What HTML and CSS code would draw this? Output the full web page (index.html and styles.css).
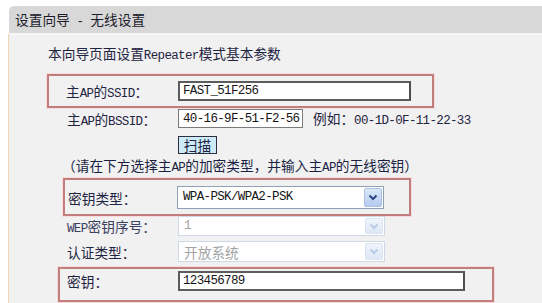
FILE: index.html
```html
<!DOCTYPE html>
<html lang="zh-CN">
<head>
<meta charset="utf-8">
<title>设置向导 - 无线设置</title>
<link rel="stylesheet" href="styles.css">
</head>
<body>
<div class="page">
  <div class="header">设置向导<span class="en"> - </span>无线设置</div>
  <div class="panel">
    <p class="intro">本向导页面设置<span class="en">Repeater</span>模式基本参数</p>

    <div class="box box1">
      <div class="row">
        <span class="lbl">主<span class="en">AP</span>的<span class="en">SSID</span>：</span>
        <input class="txt ssid" type="text" value="FAST_51F256">
      </div>
    </div>

    <div class="row plain bssid-row">
      <span class="lbl">主<span class="en">AP</span>的<span class="en">BSSID</span>：</span>
      <input class="txt bssid" type="text" value="40-16-9F-51-F2-56">
      <span class="hint">例如：<span class="en">00-1D-0F-11-22-33</span></span>
    </div>

    <div class="row plain btn-row">
      <span class="lbl"></span>
      <button class="btn" type="button">扫描</button>
    </div>

    <p class="note">（请在下方选择主<span class="en">AP</span>的加密类型，并输入主<span class="en">AP</span>的无线密钥）</p>

    <div class="box box2">
      <div class="row">
        <span class="lbl">密钥类型：</span>
        <div class="sel sel-main">
          <span class="sel-val en">WPA-PSK/WPA2-PSK</span>
          <span class="sel-arrow"><svg width="10" height="7" viewBox="0 0 10 7"><polyline points="1.5,1.5 5,5 8.5,1.5" fill="none" stroke="#2d4785" stroke-width="2"/></svg></span>
        </div>
      </div>
    </div>

    <div class="row plain wep-row">
      <span class="lbl lbl-dim"><span class="en">WEP</span>密钥序号：</span>
      <div class="sel sel-off sel-wep">
        <span class="sel-val en">1</span>
        <span class="sel-arrow"><svg width="10" height="7" viewBox="0 0 10 7"><polyline points="1.5,1.5 5,5 8.5,1.5" fill="none" stroke="#b9cde6" stroke-width="2"/></svg></span>
      </div>
    </div>

    <div class="row plain auth-row">
      <span class="lbl">认证类型：</span>
      <div class="sel sel-off sel-auth">
        <span class="sel-val">开放系统</span>
        <span class="sel-arrow"><svg width="10" height="7" viewBox="0 0 10 7"><polyline points="1.5,1.5 5,5 8.5,1.5" fill="none" stroke="#b9cde6" stroke-width="2"/></svg></span>
      </div>
    </div>

    <div class="box box3">
      <div class="row">
        <span class="lbl">密钥：</span>
        <input class="txt key" type="text" value="123456789">
      </div>
    </div>
  </div>
</div>
</body>
</html>
```

FILE: styles.css
```css
html, body {
  margin: 0;
  padding: 0;
  background: #ffffff;
}

body {
  font-family: "Noto Sans CJK SC", "Noto Sans", sans-serif;
  font-size: 13.7px;
  line-height: 16px;
  color: #1f2442;
  overflow: hidden;
}

.en {
  font-family: "Liberation Mono", "DejaVu Sans Mono", monospace;
  font-size: 12.5px;
  letter-spacing: -0.65px;
  line-height: 1;
}

.page {
  height: 303px;
  padding-top: 6px;
  box-sizing: border-box;
  display: flex;
  flex-direction: column;
}

.header {
  flex: none;
  margin-left: 9px;
  height: 27px;
  line-height: 27px;
  padding-left: 6px;
  background: #d8d8d8;
  border-top-left-radius: 5px;
  color: #1c1c2c;
  white-space: pre;
}

.panel {
  flex: 1;
  margin-left: 8px;
  border-left: 1px solid #f0d2b4;
  background: #f1f1f1;
  border-top: 2px solid #f6f6f6;
  overflow: hidden;
}

.intro {
  margin: 9px 0 0 39px;
  line-height: 18px;
  height: 18px;
  white-space: nowrap;
}

.row {
  display: flex;
  align-items: center;
}

.lbl {
  flex: none;
  white-space: nowrap;
  line-height: 16px;
  height: 16px;
}

.lbl-dim {
  color: #3b4060;
}

.box {
  box-sizing: border-box;
  border: 2px solid #c27d7d;
  box-shadow: 0 0 0 1px #f6dcdc;
}

.box1 {
  margin: 12px 0 0 38px;
  width: 387px;
  height: 34px;
  padding: 5px 0 5px 17px;
}
.box1 .lbl { width: 112px; }

.plain {
  margin-left: 58px;
}
.plain .lbl { width: 111px; }

.bssid-row { margin-top: 1px; height: 19px; }
.btn-row { margin-top: 8px; height: 18px; }

.note {
  margin: 3px 0 0 53px;
  line-height: 16px;
  height: 16px;
  white-space: nowrap;
  color: #1a1f44;
}

.box2 {
  margin: 5px 0 0 54px;
  width: 348px;
  height: 38px;
  padding: 6px 0 5px 3px;
}
.box2 .lbl { width: 109px; }

.wep-row { margin-top: 0; height: 20px; }
.auth-row { margin-top: 5px; height: 21px; }

.box3 {
  margin: 5px 0 0 49px;
  width: 436px;
  height: 35px;
  padding: 2px 0 9px 7px;
}
.box3 .lbl { width: 111px; }

.txt {
  box-sizing: border-box;
  margin: 0;
  height: 20px;
  padding: 0 0 0 3px;
  background: #ffffff;
  border: 2px solid #5c5c5c;
  border-right-color: #4e4e4e;
  color: #151515;
  font-family: "Liberation Mono", "DejaVu Sans Mono", monospace;
  font-size: 12.5px;
  letter-spacing: -0.65px;
  outline: none;
}

.ssid { width: 233px; }
.key { width: 287px; }

.bssid {
  width: 125px;
  height: 19px;
  border: 1px solid #7a7a7a;
  padding-left: 4px;
}

.hint {
  margin-left: 10px;
  white-space: nowrap;
}

.btn {
  box-sizing: border-box;
  margin: 0;
  width: 39px;
  height: 18px;
  padding: 0;
  background: #cdeaf7;
  border: 1px solid #2b2f3f;
  font-family: "Noto Sans CJK SC", sans-serif;
  font-size: 13.7px;
  line-height: 15px;
  color: #1f2442;
}

.sel {
  box-sizing: border-box;
  width: 207px;
  display: flex;
  align-items: center;
  background: #ffffff;
  border: 1px solid #8f9fb4;
  padding: 1px;
}

.sel-main { height: 23px; }
.sel-wep { height: 20px; border-color: #cfd9e5; }
.sel-auth { height: 21px; border-color: #cfd9e5; }

.sel-val {
  flex: 1;
  padding-left: 4px;
  white-space: nowrap;
  color: #151515;
}

.sel-off .sel-val {
  color: #a3a3a3;
}

.sel-arrow {
  flex: none;
  box-sizing: border-box;
  width: 18px;
  align-self: stretch;
  display: flex;
  align-items: center;
  justify-content: center;
  background: linear-gradient(#dbe7f9, #b4cbef);
  border: 1px solid #a9bfe3;
  border-radius: 2px;
}

.sel-off .sel-arrow {
  background: linear-gradient(#eef4fb, #dde8f6);
  border-color: #dbe5f2;
}
```
